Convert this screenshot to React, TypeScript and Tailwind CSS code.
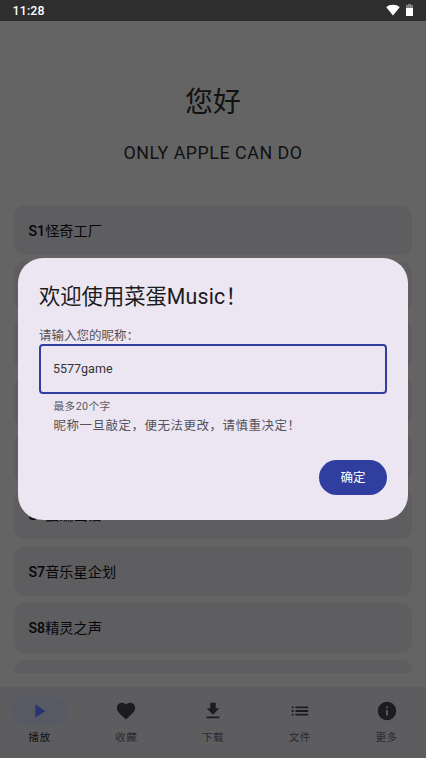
import { useState } from "react";
import { MdFavorite, MdDownload, MdList, MdInfo, MdPlayArrow } from "react-icons/md";

const albums = [
  { code: "S1", title: "怪奇工厂" },
  { code: "", title: "" },
  { code: "", title: "" },
  { code: "", title: "" },
  { code: "", title: "" },
  { code: "S6", title: "蛋编出谱" },
  { code: "S7", title: "音乐星企划" },
  { code: "S8", title: "精灵之声" },
  { code: "", title: "" },
];

const tabs = [
  { label: "播放", icon: MdPlayArrow },
  { label: "收藏", icon: MdFavorite },
  { label: "下载", icon: MdDownload },
  { label: "文件", icon: MdList },
  { label: "更多", icon: MdInfo },
];

export default function App() {
  const [name, setName] = useState("5577game");
  const [tab, setTab] = useState(0);

  return (
    <div className="relative flex h-[758px] w-[426px] flex-col overflow-hidden bg-[#646464] font-[Roboto,'Noto_Sans_CJK_SC',sans-serif] text-[#111112]">
      <StatusBar />

      <main className="flex h-[652px] shrink-0 flex-col overflow-hidden px-[14px]">
        <h1 className="mt-[61px] text-center text-[28px] leading-[42px]">您好</h1>
        <p className="mt-[17px] text-center text-[17.8px] leading-[24px] tracking-[0.55px]">ONLY APPLE CAN DO</p>
        <ul className="mt-[40.5px] flex flex-col gap-[7.1px]">
          {albums.map((album, i) => (
            <li
              key={i}
              className="flex h-[49.7px] shrink-0 items-center rounded-[11px] bg-[#5e5e60] pt-[2.5px] pl-[14.5px] text-[14.2px] text-[#060606]"
            >
              <span className="font-medium">{album.code}</span>
              <span>{album.title}</span>
            </li>
          ))}
        </ul>
      </main>

      <nav className="mt-[14px] grid h-[71px] grid-cols-5 gap-2 bg-[#5d5d60] pt-[9px]">
        {tabs.map(({ label, icon: Icon }, i) => (
          <button key={label} onClick={() => setTab(i)} className="flex flex-col items-center">
            <span
              className={
                i === tab
                  ? "flex h-[29px] w-[57px] items-center justify-center rounded-full bg-[#575a63] text-[#28336f]"
                  : "flex h-[29px] w-[57px] items-center justify-center text-[#1c1b20]"
              }
            >
              <Icon size={22} />
            </span>
            <span
              className={
                i === tab
                  ? "mt-[5px] text-[10.7px] leading-[16px] tracking-[0.4px] text-[#111113]"
                  : "mt-[5px] text-[10.7px] leading-[16px] tracking-[0.4px] text-[#2b2a30]"
              }
            >
              {label}
            </span>
          </button>
        ))}
      </nav>

      {/* Nickname dialog */}
      <div className="absolute top-[258px] left-[18px] flex h-[262px] w-[390px] flex-col rounded-[25px] bg-[#ebe6f1] px-[21px] pt-[23px]">
        <h2 className="text-[21.3px] leading-[32px] text-[#1c1b20]">
          欢迎使用菜蛋<span className="tracking-[0.2px]">Music</span>！
        </h2>
        <label className="mt-[14px] text-[12.5px] leading-[17px] text-[#55525b]">请输入您的昵称：</label>
        <input
          value={name}
          maxLength={20}
          onChange={(e) => setName(e.target.value)}
          className="h-[50px] w-[348px] shrink-0 rounded-[4px] border-2 border-[#303f9f] px-[12px] pb-[2px] text-[12.5px] text-[#333138] outline-none"
        />
        <p className="mt-[5px] pl-[14.5px] text-[10.7px] leading-[16px] tracking-[0.4px] text-[#5c5962]">最多20个字</p>
        <p className="mt-[2px] pl-[14.5px] text-[12.5px] leading-[18px] tracking-[0.5px] text-[#55525b]">
          昵称一旦敲定，便无法更改，请慎重决定！
        </p>
        <button className="mt-[24.5px] h-[35.5px] w-[68px] self-end rounded-full bg-[#303f9f] pt-[3px] text-[12.5px] text-white">
          确定
        </button>
      </div>
    </div>
  );
}

function StatusBar() {
  return (
    <header className="flex h-[21px] shrink-0 items-center justify-between bg-[#2e2e2e] pr-[13px] pl-[12.5px] text-white">
      <span className="pt-[2px] text-[12.3px] font-medium tracking-[0.2px]">11:28</span>
      <span className="flex items-center gap-[6px] pb-[1px]">
        <svg width="14" height="12" viewBox="0 0 14 12" fill="currentColor">
          <path d="M0.3 3.2C4 0 10 0 13.7 3.2L7 11.6Z" />
        </svg>
        <svg width="7" height="12" viewBox="0 0 7 12" fill="currentColor">
          <path d="M2 0H5V1H7V4H0V1H2Z" opacity="0.4" />
          <path d="M0 4H7V12H0Z" />
        </svg>
      </span>
    </header>
  );
}
